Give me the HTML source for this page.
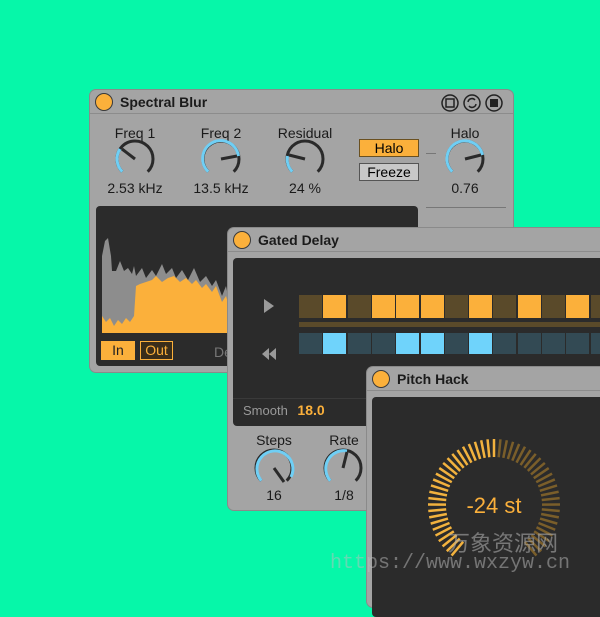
<!DOCTYPE html>
<html><head><meta charset="utf-8"><style>
*{margin:0;padding:0;box-sizing:border-box}
body{width:600px;height:600px;background:#06f7a9;position:relative;overflow:hidden;font-family:"Liberation Sans",sans-serif}
.p{position:absolute;background:#a4a4a4;border-radius:6px;box-shadow:0 0 0 1px #8a8a8a}
.t{position:absolute;left:0;top:0;right:0;height:24px;border-bottom:1px solid #8c8c8c;font-weight:bold;font-size:14px;color:#1b1b1b;padding-left:30px;line-height:24px}
.dot{position:absolute;left:5px;top:3px;width:18px;height:18px;border-radius:50%;background:#fbb03b;border:1.5px solid #3a3a3a}
.a{position:absolute;font-size:14px;color:#1a1a1a;text-align:center}
.d{position:absolute;background:#2b2b2b;border-radius:4px}
</style></head><body>

<div class="p" style="left:90px;top:90px;width:423px;height:282px">
 <div class="t"><div class="dot"></div>Spectral Blur</div>
 <svg style="position:absolute;left:350px;top:3px" width="70" height="20">
  <g fill="none" stroke="#222" stroke-width="1.5"><circle cx="10" cy="10" r="8"/><circle cx="32" cy="10" r="8"/><circle cx="54" cy="10" r="8"/></g>
  <rect x="6" y="6" width="8" height="8" fill="none" stroke="#222" stroke-width="1.5"/>
  <path d="M28 9a4 4 0 0 1 7-2M36 11a4 4 0 0 1-7 2" stroke="#222" stroke-width="1.5" fill="none"/>
  <rect x="50" y="6" width="8" height="8" fill="#222"/>
 </svg>
 <div class="a" style="left:10px;top:35px;width:70px">Freq 1</div>
 <div class="a" style="left:96px;top:35px;width:70px">Freq 2</div>
 <div class="a" style="left:180px;top:35px;width:70px">Residual</div>
 <div class="a" style="left:335px;top:35px;width:80px">Halo</div>
 <div class="a" style="left:5px;top:90px;width:80px">2.53 kHz</div>
 <div class="a" style="left:91px;top:90px;width:80px">13.5 kHz</div>
 <div class="a" style="left:175px;top:90px;width:80px">24 %</div>
 <div class="a" style="left:335px;top:90px;width:80px">0.76</div>
 <div style="position:absolute;left:269px;top:49px;width:60px;height:18px;background:#fbb03b;border:1px solid #6a5020;font-size:14px;text-align:center;line-height:16px">Halo</div>
 <div style="position:absolute;left:269px;top:73px;width:60px;height:18px;background:#c8c8c8;border:1px solid #555;font-size:14px;text-align:center;line-height:16px">Freeze</div>
 <div style="position:absolute;left:336px;top:63px;width:10px;height:1px;background:#777"></div>
 <div style="position:absolute;left:336px;top:117px;width:80px;height:1px;background:#777"></div>
 <svg style="position:absolute;left:0;top:0" width="423" height="120" fill="none" stroke-width="3">
  <g transform="translate(45,69)"><path d="M-12.7 12.7A18 18 0 1 1 12.7 12.7" stroke="#2a2a2a"/><path d="M-12.7 12.7A18 18 0 0 1 -15 -10" stroke="#6fcff5"/><line x1="0" y1="0" x2="-13" y2="-10" stroke="#2a2a2a"/></g>
  <g transform="translate(131,69)"><path d="M-12.7 12.7A18 18 0 1 1 12.7 12.7" stroke="#2a2a2a"/><path d="M-12.7 12.7A18 18 0 1 1 17.5 -3" stroke="#6fcff5"/><line x1="0" y1="0" x2="16" y2="-3" stroke="#2a2a2a"/></g>
  <g transform="translate(215,69)"><path d="M-12.7 12.7A18 18 0 1 1 12.7 12.7" stroke="#2a2a2a"/><path d="M-12.7 12.7A18 18 0 0 1 -17.5 -3" stroke="#6fcff5"/><line x1="0" y1="0" x2="-16" y2="-4" stroke="#2a2a2a"/></g>
  <g transform="translate(375,69)"><path d="M-12.7 12.7A18 18 0 1 1 12.7 12.7" stroke="#2a2a2a"/><path d="M-12.7 12.7A18 18 0 1 1 17.5 -4" stroke="#6fcff5"/><line x1="0" y1="0" x2="16" y2="-4" stroke="#2a2a2a"/></g>
 </svg>
 <div class="d" style="left:6px;top:116px;width:322px;height:160px">
  <svg width="322" height="160" style="position:absolute;left:0;top:0">
   <path d="M6 127L6 50 9 35 12 32 15 50 16 65 20 65 24 55 28 65 32 62 36 68 38 60 40 70 46 62 50 72 56 64 60 70 66 58 70 68 76 62 80 72 86 64 92 74 98 62 104 76 110 70 116 80 120 74 126 90 130 80 134 100 140 90 140 127Z" fill="#8d8d8d"/>
   <path d="M6 127L6 110 10 116 14 112 18 120 22 114 26 118 30 112 34 116 38 110 40 80 44 78 50 76 56 74 60 70 66 76 72 72 78 70 84 76 90 72 96 78 100 74 106 82 110 78 116 86 120 80 126 96 130 90 134 104 140 100 140 127Z" fill="#fbb03b"/>
  </svg>
  <div style="position:absolute;left:5px;top:135px;width:34px;height:19px;background:#fbb03b;font-size:14px;text-align:center;line-height:19px;color:#222">In</div>
  <div style="position:absolute;left:44px;top:135px;width:33px;height:19px;background:#3a2e1a;border:1.5px solid #fbb03b;color:#fbb03b;font-size:14px;text-align:center;line-height:16px">Out</div>
  <div style="position:absolute;left:118px;top:138px;font-size:14px;color:#777">De</div>
 </div>
</div>

<div class="p" style="left:228px;top:228px;width:380px;height:282px">
 <div class="t"><div class="dot"></div>Gated Delay</div>
 <div class="d" style="left:5px;top:30px;width:380px;height:168px">
  <svg style="position:absolute;left:28px;top:40px" width="20" height="80">
   <path d="M3 1L13 8 3 15Z" fill="#9a9a9a"/>
   <path d="M8 50L1 56 8 62ZM15 50L8 56 15 62Z" fill="#9a9a9a"/>
  </svg>
  <div id="seq" style="position:absolute;left:66px;top:0"></div>
  <div style="position:absolute;left:0;top:140px;width:380px;height:1px;background:#3a3a3a"></div>
  <div style="position:absolute;left:10px;top:144px;font-size:13px;color:#9a9a9a">Smooth <span style="color:#fbb03b;font-weight:bold;font-size:14px;margin-left:6px">18.0</span></div>
 </div>
 <div class="a" style="left:18px;top:204px;width:56px">Steps</div>
 <div class="a" style="left:88px;top:204px;width:56px">Rate</div>
 <div class="a" style="left:18px;top:259px;width:56px">16</div>
 <div class="a" style="left:88px;top:259px;width:56px">1/8</div>
 <svg style="position:absolute;left:0;top:200px" width="160" height="80" fill="none" stroke-width="3">
  <g transform="translate(46,40)"><path d="M-12.7 12.7A18 18 0 1 1 12.7 12.7" stroke="#2a2a2a"/><path d="M-12.7 12.7A18 18 0 1 1 17 9" stroke="#6fcff5"/><line x1="0" y1="0" x2="10" y2="14" stroke="#2a2a2a"/></g>
  <g transform="translate(115,40)"><path d="M-12.7 12.7A18 18 0 1 1 12.7 12.7" stroke="#2a2a2a"/><path d="M-12.7 12.7A18 18 0 0 1 4 -17" stroke="#6fcff5"/><line x1="0" y1="0" x2="4" y2="-16" stroke="#2a2a2a"/></g>
 </svg>
</div>

<div class="p" style="left:367px;top:367px;width:240px;height:240px">
 <div class="t"><div class="dot"></div>Pitch Hack</div>
 <div class="d" style="left:5px;top:30px;width:240px;height:220px">
  <svg id="dial" width="240" height="220" style="position:absolute;left:0;top:0"></svg>
  <div style="position:absolute;left:72px;top:96px;width:100px;text-align:center;font-size:22px;color:#fbb03b">-24 st</div>
 </div>
</div>

<div style="position:absolute;left:448px;top:526px;font-family:'Noto Sans CJK SC',sans-serif;font-size:22px;color:rgba(170,170,170,0.6)">万象资源网</div>
<div style="position:absolute;left:330px;top:552px;font-family:'Liberation Mono',monospace;font-size:20px;color:rgba(190,190,190,0.5)">https://www.wxzyw.cn</div>

<script>
var s=document.getElementById('seq'),h='';
var o=[0,1,0,1,1,1,0,1,0,1,0,1,0],b=[0,1,0,0,1,1,0,1,0,0,0,0,0];
for(var i=0;i<13;i++){var x=i*24.3;
h+='<div style="position:absolute;left:'+x+'px;top:37px;width:23px;height:23px;background:'+(o[i]?'#fbb03b':'#5a4a2a')+'"></div>';
h+='<div style="position:absolute;left:'+x+'px;top:75px;width:23px;height:21px;background:'+(b[i]?'#6fd3fb':'#334a54')+'"></div>';}
h+='<div style="position:absolute;left:0;top:64px;width:320px;height:5px;background:#5a4a2a"></div>';
s.innerHTML=h;
var d=document.getElementById('dial'),g='',cx=122,cy=108;
for(var k=0;k<=50;k++){var a=(-140+k*5.6)*Math.PI/180;var c=Math.sin(a),e=-Math.cos(a);
var br=k<=25;var col=br?'#f2b23e':'#7a5e2a';
g+='<line x1="'+(cx+c*48)+'" y1="'+(cy+e*48)+'" x2="'+(cx+c*66)+'" y2="'+(cy+e*66)+'" stroke="'+col+'" stroke-width="2.5"/>';}
d.innerHTML=g;
</script>
</body></html>
